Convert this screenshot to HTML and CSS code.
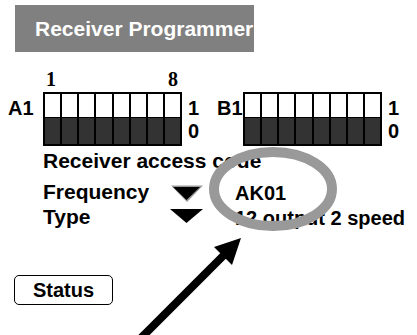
FILE: index.html
```html
<!DOCTYPE html>
<html>
<head>
    <meta charset="UTF-8">
    <title>Receiver Programmer</title>
    <link rel="stylesheet" href="styles.css">
</head>
<body>
<div class="page">
    <div class="header">Receiver Programmer</div>

    <div class="numbers">
        <span class="num-first">1</span>
        <span class="num-last">8</span>
    </div>

    <div class="dip-row">
        <div class="dip-label">A1</div>
        <div class="dip">
            <div class="cell"></div><div class="cell"></div><div class="cell"></div><div class="cell"></div>
            <div class="cell"></div><div class="cell"></div><div class="cell"></div><div class="cell"></div>
        </div>
        <div class="dip-side">1<br>0</div>

        <div class="dip-label dip-label-b">B1</div>
        <div class="dip">
            <div class="cell"></div><div class="cell"></div><div class="cell"></div><div class="cell"></div>
            <div class="cell"></div><div class="cell"></div><div class="cell"></div><div class="cell"></div>
        </div>
        <div class="dip-side">1<br>0</div>
    </div>

    <div class="info">
        <div class="access">Receiver access code</div>
        <div class="field">
            <div class="field-name">Frequency</div>
            <svg class="drop" width="40" height="24" viewBox="0 0 40 24">
                <polygon points="3,5.5 35,5.5 19,22" fill="#999"/>
                <polygon points="5,7 32,7 18.5,20" fill="#000"/>
            </svg>
            <div class="field-value">AK01</div>
        </div>
        <div class="field">
            <div class="field-name">Type</div>
            <svg class="drop" width="40" height="24" viewBox="0 0 40 24">
                <polygon points="2,4 35,4 18.5,18" fill="#000"/>
            </svg>
            <div class="field-value">12 output 2 speed</div>
        </div>
    </div>

    <div class="status">Status</div>

    <!-- annotation drawn over the form -->
    <svg class="marks" width="417" height="335" viewBox="0 0 417 335">
        <ellipse cx="273" cy="189" rx="59" ry="37" fill="none" stroke="#999" stroke-width="10"/>
        <line x1="224" y1="255" x2="136" y2="343" stroke="#000" stroke-width="8"/>
        <polygon points="241,238 214,247 232,265" fill="#000"/>
    </svg>
</div>
</body>
</html>
```

FILE: styles.css
```css
*{
    margin: 0;
    padding: 0;
}
body{
    background: #fff;
    font-family: "Liberation Sans", Arial, sans-serif;
    font-weight: bold;
    color: #000;
}
.page{
    width: 417px;
    height: 335px;
    position: relative;
    overflow: hidden;
}
.header{
    margin: 5px 0 0 15px;
    width: 219px;
    height: 47px;
    padding-left: 20px;
    line-height: 47px;
    background: #808080;
    color: #fff;
    font-size: 21px;
    white-space: nowrap;
}
/*switch numbers above A1*/
.numbers{
    margin-top: 18px;
    height: 22px;
    font-family: "Liberation Serif", "Times New Roman", serif;
    font-size: 20px;
    line-height: 18px;
    display: flex;
}
.num-first{
    margin-left: 46px;
}
.num-last{
    margin-left: 112px;
}
.dip-row{
    display: flex;
    padding-left: 8px;
    font-size: 20px;
    line-height: 23px;
}
.dip-label{
    width: 35px;
    padding-top: 5px;
}
.dip-label-b{
    width: 26px;
}
.dip{
    width: 135px;
    height: 50px;
    border: 2px solid #000;
    display: flex;
}
.cell{
    flex: 1;
    border-left: 2px solid #000;
    background: linear-gradient(#fff 0, #fff 23px, #000 23px, #000 24px, #333 24px);
}
.cell:first-child{
    border-left: none;
}
.dip-side{
    width: 29px;
    padding: 5px 0 0 6px;
}
.info{
    margin-top: 3px;
    padding-left: 43px;
    font-size: 21px;
    line-height: 24px;
}
.access{
    margin-bottom: 7px;
}
.field{
    display: flex;
    align-items: flex-start;
}
.field-name{
    width: 125px;
}
.drop{
    display: block;
    flex: none;
}
.field-value{
    margin-left: 27px;
    padding-top: 1px;
    font-size: 20px;
    white-space: nowrap;
}
.status{
    margin: 45px 0 0 14px;
    width: 97px;
    height: 28px;
    border: 1px solid #000;
    border-radius: 5px;
    font-size: 20px;
    line-height: 28px;
    text-align: center;
}
.marks{
    position: absolute;
    left: 0;
    top: 0;
    pointer-events: none;
}
```
